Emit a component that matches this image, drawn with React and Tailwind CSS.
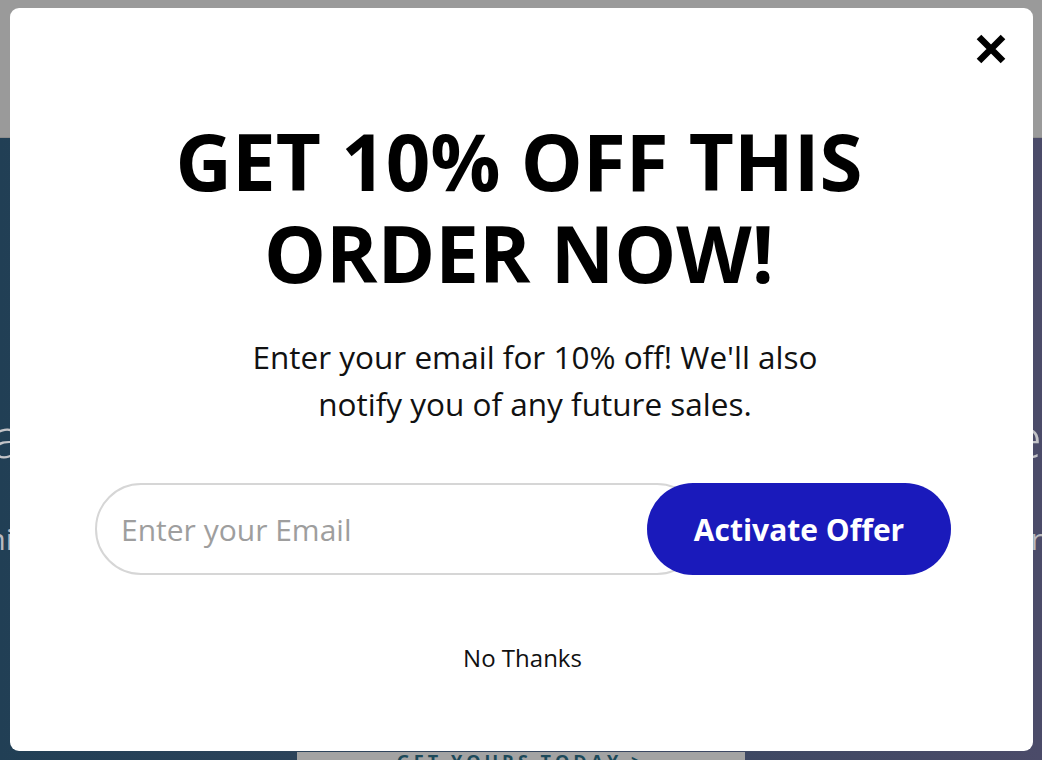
import React, { useState } from "react";

function CloseIcon() {
  return (
    <svg width="30" height="30" viewBox="0 0 30 30" fill="none">
      <path d="M3 3 L27 27 M27 3 L3 27" stroke="#000" strokeWidth="6.5" strokeLinecap="butt" />
    </svg>
  );
}

function App() {
  const [email, setEmail] = useState("");
  const [abierto, setAbierto] = useState(true);

  return (
    <div className="relative h-[760px] w-full overflow-hidden font-['Open_Sans',sans-serif]">
      {/* pagina de fondo, ya oscurecida por el overlay */}
      <div className="h-[138px] bg-[#9a9a9a] border-b border-[#8c8c8c]" />
      <div className="relative h-[622px] bg-gradient-to-r from-[#213f55] via-[#34465e] to-[#4b4b69] flex flex-col items-center overflow-hidden">
        <div className="mt-[270px] whitespace-nowrap text-[56px] font-light leading-none text-[#c4c4c8]">
          Handcrafted in small batches, made to be worn everyday
        </div>
        <div className="mt-[52px] whitespace-nowrap text-[30px] text-[#b9b9bf]">
          Premium materials and timeless design, crafted for comfort that lasts year after year
        </div>
        <div className="mt-auto h-[8px] w-[448px] bg-[#a3a3a3] flex items-start justify-center text-[18px] font-bold tracking-[4px] text-[#1d4a5a] leading-none">
          GET YOURS TODAY &gt;
        </div>
      </div>

      {abierto && (
        <div className="fixed inset-0 pt-[8px] pr-[9px] pb-[9px] pl-[10px]">
          <div className="relative h-full w-full rounded-[9px] bg-white flex flex-col items-center pt-[107px]">
            <button
              onClick={() => setAbierto(false)}
              className="absolute right-[27px] top-[26px] p-0"
              aria-label="Cerrar"
            >
              <CloseIcon />
            </button>

            <h1 className="-ml-[5px] text-center text-[78px] font-bold leading-[92px] text-black">
              GET 10% OFF THIS
              <br />
              ORDER NOW!
            </h1>

            <p className="mt-[34px] ml-[27px] text-center text-[31.5px] leading-[47px] text-[#111]">
              Enter your email for 10% off! We'll also
              <br />
              notify you of any future sales.
            </p>

            <div className="mt-[56px] ml-[3px] flex h-[92px] w-[856px]">
              <input
                type="email"
                value={email}
                onChange={(e) => setEmail(e.target.value)}
                placeholder="Enter your Email"
                className="h-full flex-1 rounded-full border-2 border-[#d6d6d6] bg-white pl-[24px] text-[30px] text-[#333] placeholder:text-[#9e9e9e] outline-none"
              />
              <button className="-ml-[56px] h-full w-[304px] rounded-full bg-[#1a1abb] text-[30px] font-bold text-white">
                Activate Offer
              </button>
            </div>

            <button
              onClick={() => setAbierto(false)}
              className="mt-[68px] ml-[2px] text-[24px] leading-[30px] text-[#111]"
            >
              No Thanks
            </button>
          </div>
        </div>
      )}
    </div>
  );
}

export default App;
